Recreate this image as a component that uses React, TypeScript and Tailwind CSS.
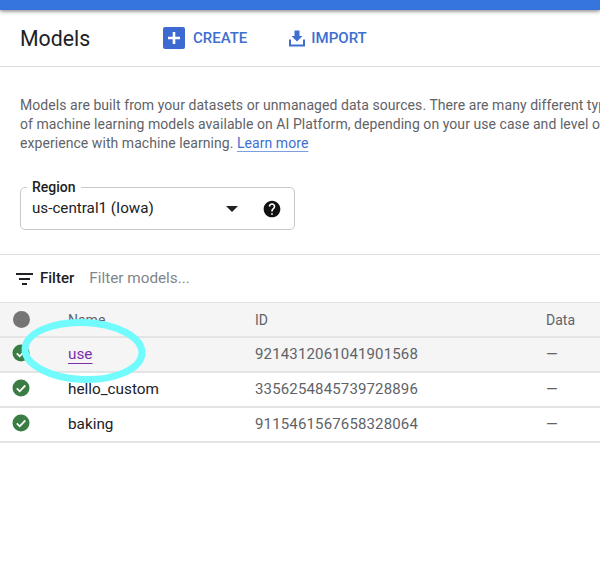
import React from "react";

function Check() {
  return (
    <svg width="18" height="18" viewBox="0 0 18 18" className="block">
      <circle cx="9" cy="9" r="8.5" fill="#3a7d44" />
      <path d="M4.8 9.4l2.9 2.9 5.6-5.8" fill="none" stroke="#fff" strokeWidth="1.8" />
    </svg>
  );
}

function Row({ name, id, active, link }: { name: string; id: string; active?: boolean; link?: boolean }) {
  return (
    <div className={`flex h-[35px] items-center border-b-2 border-[#e4e4e4] ${active ? "bg-[#f5f5f5]" : "bg-white"}`}>
      <div className="w-[68px] pl-[12px] pb-[3px] shrink-0">
        <Check />
      </div>
      <div className="w-[187px] shrink-0 text-[15.3px] text-[#202124]">
        {link ? <span className="text-[#7b2fa8] underline underline-offset-[4px]">{name}</span> : name}
      </div>
      <div className="w-[291px] shrink-0 text-[15px] text-[#5f6368] tracking-[0.15px]">{id}</div>
      <div className="text-[15px] text-[#5f6368]">—</div>
    </div>
  );
}

export default function App() {
  return (
    <div className="relative h-[573px] w-[600px] overflow-hidden bg-white font-['Roboto',sans-serif]">
      <div className="h-[10px] bg-[#3674de] shadow-[0_1px_4px_rgba(0,0,0,0.55)]" />
      <div className="flex h-[57px] items-center border-b border-[#dcdcdc] pl-[20px]">
        <div className="w-[143px] text-[21.3px] text-[#202124] pt-[1px]">Models</div>
        <div className="flex items-center gap-[8px] text-[15px] font-medium text-[#3d6fd1]">
          <div className="flex h-[22px] w-[22px] items-center justify-center rounded-[2px] bg-[#3d6ad0]">
            <svg width="14" height="14" viewBox="0 0 14 14">
              <path d="M7 1v12M1 7h12" stroke="#fff" strokeWidth="2.6" />
            </svg>
          </div>
          <span>CREATE</span>
        </div>
        <div className="ml-[42px] flex items-center gap-[6px] text-[15px] font-medium text-[#3d6fd1]">
          <svg width="16" height="17" viewBox="0 0 16 17">
            <path d="M5.5 0.5h5v5.5h3L8 11.5 2.5 6h3z" fill="#3d6fd1" />
            <path d="M1 9.5v6h14v-6" fill="none" stroke="#3d6fd1" strokeWidth="2" />
          </svg>
          <span>IMPORT</span>
        </div>
      </div>

      <div className="whitespace-nowrap pl-[20px] pt-[29px] text-[14px] leading-[19px] tracking-[0.06px] text-[#5f6368]">
        <div>Models are built from your datasets or unmanaged data sources. There are many different types</div>
        <div>of machine learning models available on AI Platform, depending on your use case and level of</div>
        <div>
          experience with machine learning.{" "}
          <span className="text-[#3d6fd1] underline decoration-[#7d9fe0] underline-offset-[3px]">Learn more</span>
        </div>
      </div>

      <div className="relative ml-[20px] mt-[34px] flex h-[43px] w-[275px] items-center rounded-[5px] border border-[#c8c8c8] pl-[11px] pr-[12px]">
        <span className="absolute left-[6px] top-[-9px] bg-white px-[5px] text-[14px] leading-[16px] font-medium text-[#202124]">Region</span>
        <span className="flex-1 text-[15.2px] text-[#202124]">us-central1 (Iowa)</span>
        <svg width="12" height="6" viewBox="0 0 12 6" className="mr-[24px]">
          <path d="M0 0h12L6 6z" fill="#202124" />
        </svg>
        <svg width="20" height="20" viewBox="0 0 24 24">
          <path
            d="M12 2C6.48 2 2 6.48 2 12s4.48 10 10 10 10-4.48 10-10S17.52 2 12 2zm1 17h-2v-2h2v2zm2.07-7.75l-.9.92C13.45 12.9 13 13.5 13 15h-2v-.5c0-1.1.45-2.1 1.17-2.83l1.24-1.26c.37-.36.59-.86.59-1.41 0-1.1-.9-2-2-2s-2 .9-2 2H8c0-2.21 1.79-4 4-4s4 1.79 4 4c0 .88-.36 1.68-.93 2.25z"
            fill="#111"
          />
        </svg>
      </div>

      <div className="mt-[24px] flex h-[49px] items-center border-y border-[#e0e0e0] pl-[16px]">
        <svg width="18" height="12" viewBox="0 0 18 12">
          <path d="M0 1h17M3 6h11M6 11h5" stroke="#202124" strokeWidth="2" />
        </svg>
        <span className="ml-[6px] text-[15px] font-medium text-[#202124]">Filter</span>
        <span className="ml-[15px] text-[15.3px] text-[#80868b]">Filter models...</span>
      </div>

      <div className="flex h-[35px] items-center border-b-2 border-[#e4e4e4] bg-[#f5f5f5] text-[14px] text-[#5f6368]">
        <div className="w-[68px] shrink-0 pl-[13px]">
          <div className="h-[17px] w-[17px] rounded-full bg-[#757575]" />
        </div>
        <div className="w-[187px] shrink-0 pt-[2px]">Name</div>
        <div className="w-[291px] shrink-0 pt-[2px]">ID</div>
        <div className="pt-[2px]">Data</div>
      </div>
      <Row name="use" id="9214312061041901568" active link />
      <Row name="hello_custom" id="3356254845739728896" />
      <Row name="baking" id="9115461567658328064" />

      <svg width="600" height="573" className="pointer-events-none absolute left-0 top-0">
        <ellipse cx="83.5" cy="351" rx="58.5" ry="28.5" transform="rotate(2 83.5 351)" fill="none" stroke="#72fbfd" strokeWidth="7" />
      </svg>
    </div>
  );
}
